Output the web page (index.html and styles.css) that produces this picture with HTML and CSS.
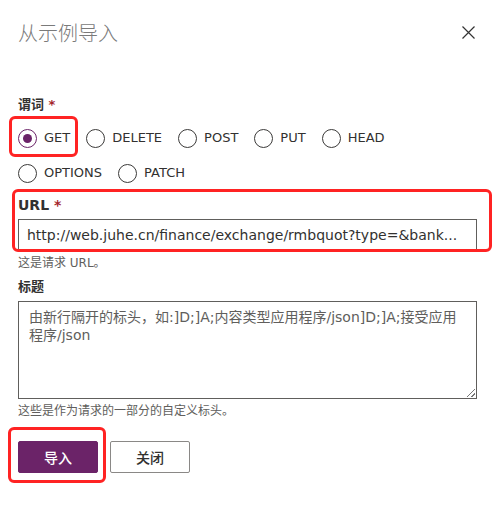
FILE: index.html
```html
<!DOCTYPE html>
<html lang="zh">
<head>
<meta charset="utf-8">
<title>从示例导入</title>
<link rel="stylesheet" href="styles.css">
</head>
<body>
<div class="dialog">
  <div class="header">
    <h1 class="title">从示例导入</h1>
    <button class="close" aria-label="关闭">
      <svg width="13" height="13" viewBox="0 0 13 13"><path d="M0.5 0.5 L12.5 12.5 M12.5 0.5 L0.5 12.5" stroke="#333" stroke-width="1.2" fill="none"/></svg>
    </button>
  </div>

  <div class="field verb">
    <div class="label">谓词 <span class="req">*</span></div>
    <div class="radios">
      <label class="radio hl hl-get"><span class="dot checked"></span><span>GET</span></label>
      <label class="radio"><span class="dot"></span><span>DELETE</span></label>
      <label class="radio"><span class="dot"></span><span>POST</span></label>
      <label class="radio"><span class="dot"></span><span>PUT</span></label>
      <label class="radio"><span class="dot"></span><span>HEAD</span></label>
      <label class="radio"><span class="dot"></span><span>OPTIONS</span></label>
      <label class="radio"><span class="dot"></span><span>PATCH</span></label>
    </div>
  </div>

  <div class="field url hl hl-url">
    <div class="label big">URL <span class="req">*</span></div>
    <div class="input">http://web.juhe.cn/finance/exchange/rmbquot?type=&amp;bank...</div>
  </div>
  <div class="help">这是请求 URL。</div>

  <div class="field headers">
    <div class="label">标题</div>
    <div class="textarea">由新行隔开的标头，如:]D;]A;内容类型应用程序/json]D;]A;接受应用程序/json<span class="grip"></span></div>
  </div>
  <div class="help">这些是作为请求的一部分的自定义标头。</div>

  <div class="actions">
    <span class="hl hl-btn"><button class="btn primary">导入</button></span>
    <button class="btn">关闭</button>
  </div>
</div>
</body>
</html>
```

FILE: styles.css
```css
* { box-sizing: border-box; }
html, body { min-height: 100%; }
body {
  margin: 0;
  background: #fff;
  font-family: "DejaVu Sans", "Noto Sans CJK SC", sans-serif;
  color: #323130;
}
.dialog {
  width: 497px;
  padding: 0 20px 40px 18px;
}
.header {
  display: flex;
  justify-content: space-between;
  align-items: flex-start;
  padding-top: 19px;
  height: 96px;
}
.title {
  margin: 0;
  font-family: "Noto Sans CJK SC", sans-serif;
  font-weight: 300;
  font-size: 20px;
  line-height: 28px;
  color: #7a7a7a;
}
.close {
  border: 0;
  background: none;
  padding: 0;
  margin: 7px 2px 0 0;
  width: 13px;
  height: 13px;
  display: block;
}
.close svg { display: block; }

.label {
  font-family: "DejaVu Sans", "Noto Sans CJK SC", sans-serif;
  font-weight: bold;
  font-size: 13px;
  line-height: 18px;
  color: #323130;
}
.label.big { font-size: 14px; }
.req { color: #a4262c; }

.radios {
  display: flex;
  flex-wrap: wrap;
  column-gap: 16px;
  row-gap: 13px;
  margin-top: 13px;
  width: 400px;
}
.radio {
  display: flex;
  align-items: center;
  gap: 7px;
  font-size: 13px;
  line-height: 22px;
  color: #323130;
}
.dot {
  width: 19px;
  height: 19px;
  border: 1.3px solid #3b3a39;
  border-radius: 50%;
  display: flex;
  align-items: center;
  justify-content: center;
}
.dot.checked {
  border-color: #6b2368;
}
.dot.checked::before {
  content: "";
  width: 9px;
  height: 9px;
  border-radius: 50%;
  background: #6b2368;
}

.hl { position: relative; }
.hl::after {
  content: "";
  position: absolute;
  border: 3px solid #ff2323;
  border-radius: 6px;
  pointer-events: none;
}
.hl-get::after { left: -9px; right: -8px; top: -11px; bottom: -8px; }
.hl-url::after { left: -6px; right: -15px; top: -5px; bottom: -1px; }
.hl-btn { display: block; }
.hl-btn .btn { display: block; }
.hl-btn::after { left: -10px; right: -8px; top: -14px; bottom: -10px; }

.url { margin-top: 10px; }
.url .label { line-height: 18px; padding-top: 2px; }
.input {
  margin-top: 5px;
  height: 32px;
  border: 1px solid #605e5c;
  border-bottom: 0;
  padding: 0 8px;
  font-size: 14px;
  line-height: 30px;
  color: #323130;
  white-space: nowrap;
  overflow: hidden;
}
.help {
  font-size: 12px;
  line-height: 16px;
  color: #605e5c;
  margin-top: 4px;
}
.headers { margin-top: 7px; }
.textarea {
  position: relative;
  margin-top: 5px;
  height: 98px;
  border: 1px solid #605e5c;
  padding: 6px 9px 6px 10px;
  font-size: 14px;
  line-height: 18px;
  color: #605e5c;
}
.grip {
  position: absolute;
  right: 1px;
  bottom: 1px;
  width: 8px;
  height: 8px;
  background: linear-gradient(135deg, transparent 45%, #777 45%, #777 55%, transparent 55%, transparent 75%, #777 75%, #777 85%, transparent 85%);
}
.actions {
  display: flex;
  gap: 12px;
  margin-top: 22px;
}
.btn {
  width: 80px;
  height: 32px;
  border: 1px solid #8a8886;
  border-radius: 2px;
  background: #fff;
  font-family: "Noto Sans CJK SC", sans-serif;
  font-weight: 500;
  font-size: 14px;
  color: #323130;
  padding: 0;
}
.btn.primary {
  background: #6b2368;
  border-color: #6b2368;
  color: #fff;
}
```
